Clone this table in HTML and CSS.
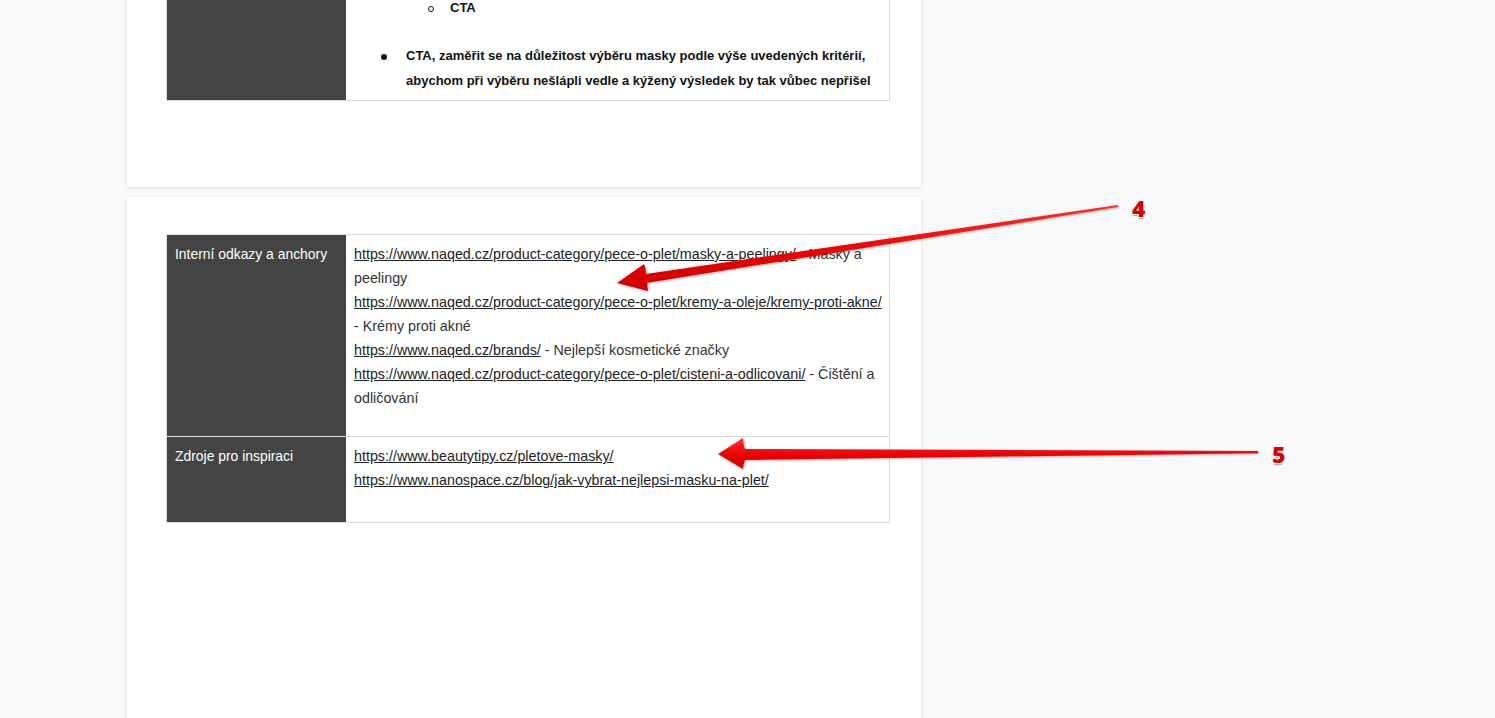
FILE: index.html
```html
<!DOCTYPE html>
<html lang="cs">
<head>
<meta charset="utf-8">
<title>Brief</title>
<link rel="stylesheet" href="styles.css">
</head>
<body>
<div class="page">
  <section class="card card-top">
    <table class="brief">
      <tr>
        <th></th>
        <td>
          <ul class="bold-list">
            <li>Struktura článku
              <ul class="sub-list"><li>CTA</li></ul>
            </li>
            <li>CTA, zaměřit se na důležitost výběru masky podle výše uvedených kritérií, abychom při výběru nešlápli vedle a kýžený výsledek by tak vůbec nepřišel</li>
          </ul>
        </td>
      </tr>
    </table>
  </section>

  <section class="card card-bottom">
    <table class="brief">
      <tr>
        <th>Interní odkazy a anchory</th>
        <td>
          <p><a href="#">https://www.naqed.cz/product-category/pece-o-plet/masky-a-peelingy/</a> - Masky a peelingy<br>
          <a href="#">https://www.naqed.cz/product-category/pece-o-plet/kremy-a-oleje/kremy-proti-akne/</a> - Krémy proti akné<br>
          <a href="#">https://www.naqed.cz/brands/</a> - Nejlepší kosmetické značky<br>
          <a href="#">https://www.naqed.cz/product-category/pece-o-plet/cisteni-a-odlicovani/</a> - Čištění a odličování</p>
        </td>
      </tr>
      <tr>
        <th>Zdroje pro inspiraci</th>
        <td>
          <p class="last"><a href="#">https://www.beautytipy.cz/pletove-masky/</a><br>
          <a href="#">https://www.nanospace.cz/blog/jak-vybrat-nejlepsi-masku-na-plet/</a></p>
        </td>
      </tr>
    </table>
  </section>

  <div class="annotations">
    <svg class="arrows" width="1495" height="718" viewBox="0 0 1495 718">
      <defs>
        <linearGradient id="red4" x1="0" y1="0" x2="0" y2="1">
          <stop offset="0" stop-color="#ff3030"/>
          <stop offset="0.55" stop-color="#ee0000"/>
          <stop offset="1" stop-color="#cc0000"/>
        </linearGradient>
      </defs>
      <path class="arrow" d="M1118.2 207 L1117.8 205 L645.9 274 Q646 268 644 264 L617 283 L648 291 Q647 286 647.3 282.8 Z"/>
      <path class="arrow" d="M1258 451 L1258 453.2 L745 460 Q743 465 743 469 L718 454 L743 438 Q743 444 745 449 Z"/>
    </svg>
    <span class="num num-4">4</span>
    <span class="num num-5">5</span>
  </div>
</div>
</body>
</html>
```
FILE: styles.css
```css
html, body {
  margin: 0;
  padding: 0;
}
body {
  background: #f8f9fa;
  font-family: "Liberation Sans", Arial, sans-serif;
  font-size: 14.3px;
  color: #333;
  overflow: hidden;
  height: 718px;
}
.page {
  position: relative;
  width: 1495px;
  height: 718px;
  overflow: hidden;
}
.card {
  width: 716px;
  margin-left: 127px;
  background: #fff;
  box-shadow: 0 1px 3px rgba(0,0,0,0.12);
  padding: 37px 39px 0 39px;
}
.card-top {
  margin-top: -74px;
  padding-bottom: 86px;
}
.card-bottom {
  margin-top: 10px;
  height: 600px;
}
.brief {
  width: 724px;
  border-collapse: collapse;
  border: 1px solid #dcdcdc;
}
.brief th {
  width: 163px;
  background: #444;
  color: #fff;
  font-size: 13.9px;
  font-weight: normal;
  text-align: left;
  vertical-align: top;
  padding: 7px 8px;
  line-height: 24px;
  border-bottom: 1px solid #dcdcdc;
}
.brief td {
  vertical-align: top;
  padding: 7px 7px 7px 8px;
  line-height: 24px;
  border-bottom: 1px solid #dcdcdc;
}
.brief p {
  margin: 0 0 19px;
}
.brief p.last {
  margin-bottom: 23px;
}
.brief a {
  color: #222;
  text-decoration: underline;
}
.bold-list {
  margin: 0;
  padding-left: 52px;
  font-size: 13px;
  font-weight: bold;
  color: #111;
  line-height: 24.5px;
  list-style: none;
}
.bold-list li {
  position: relative;
}
.bold-list > li::before {
  content: "";
  position: absolute;
  left: -25px;
  top: 10px;
  width: 6px;
  height: 6px;
  border-radius: 50%;
  background: #111;
}
.bold-list > li + li {
  margin-top: 24px;
}
.sub-list {
  margin: 0;
  padding-left: 44px;
  list-style: none;
}
.sub-list > li::before {
  content: "";
  position: absolute;
  left: -22px;
  top: 10px;
  width: 4px;
  height: 4px;
  border-radius: 50%;
  border: 1px solid #111;
  background: #fff;
}
.annotations {
  position: absolute;
  left: 0;
  top: 0;
  width: 1495px;
  height: 718px;
  pointer-events: none;
}
.arrows {
  display: block;
}
.arrow {
  fill: url(#red4);
  filter: drop-shadow(1px 1px 1px rgba(0,0,0,0.3));
}
.num {
  position: absolute;
  font-family: "Open Sans", "DejaVu Sans", sans-serif;
  font-weight: 800;
  font-size: 23px;
  line-height: 22px;
  color: #d90000;
  text-shadow: -1px -1px 0 #fff, 1px -1px 0 #fff, -1px 1px 0 #fff, 1px 1px 0 #fff, 0 2px 1px rgba(0,0,0,0.35);
}
.num-4 { left: 1132px; top: 197px; }
.num-5 { left: 1272px; top: 443px; }
```
